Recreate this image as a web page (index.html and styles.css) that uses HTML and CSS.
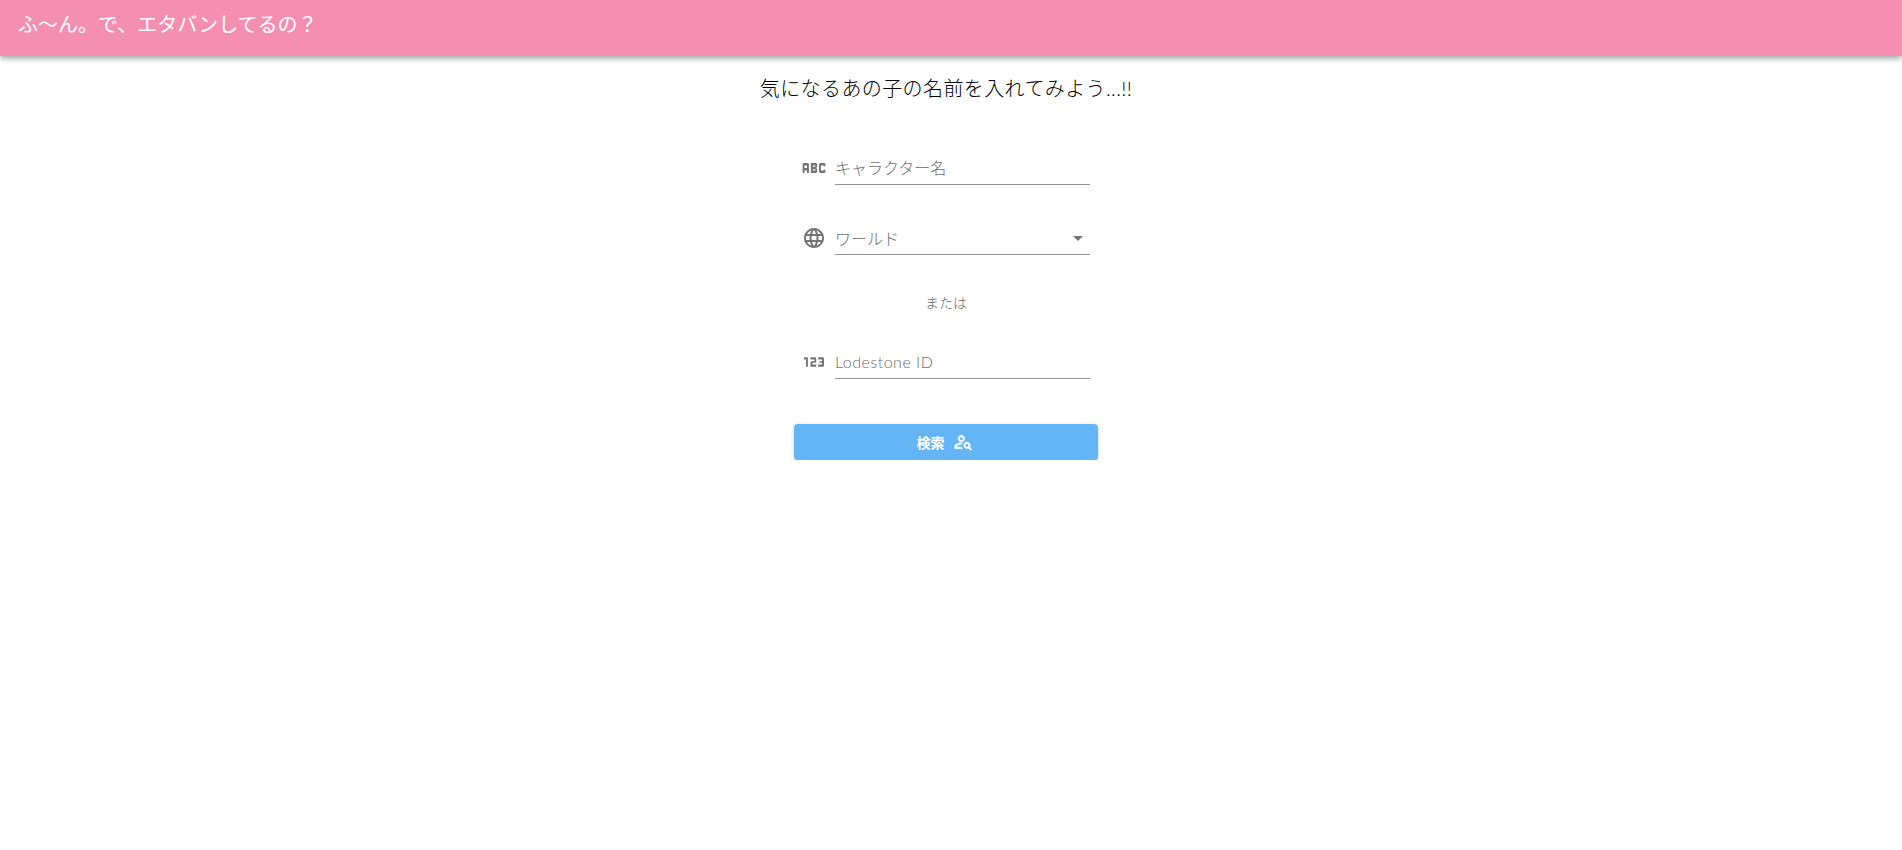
FILE: index.html
```html
<!DOCTYPE html>
<html lang="ja">
<head>
    <meta charset="UTF-8">
    <meta name="viewport" content="width=device-width, initial-scale=1.0">
    <title>エタバン検索</title>
    <link rel="stylesheet" href="styles.css">
</head>
<body>
    <header class="toolbar">ふ〜ん。で、エタバンしてるの？</header>

    <main class="content">
        <h1 class="lead">気になるあの子の名前を入れてみよう...!!</h1>

        <div class="field first">
            <svg class="field-icon" viewBox="0 0 24 24"><path transform="translate(12 12) scale(1.27 1.67) translate(-12 -12)" d="M21 11h-1.5v-.5h-2v3h2V13H21v1c0 .55-.45 1-1 1h-3c-.55 0-1-.45-1-1v-4c0-.55.45-1 1-1h3c.55 0 1 .45 1 1v1zM8 10v5H6.5v-1.5h-2V15H3v-5c0-.55.45-1 1-1h3c.55 0 1 .45 1 1zm-1.5.5h-2V12h2v-1.5zm7 1.5c.55 0 1 .45 1 1v1c0 .55-.45 1-1 1h-4V9h4c.55 0 1 .45 1 1v1c0 .55-.45 1-1 1zM11 10.5v.75h2v-.75h-2zm2 2.25h-2v.75h2v-.75z"/></svg>
            <input class="field-input" type="text" placeholder="キャラクター名">
        </div>

        <div class="field second">
            <svg class="field-icon" viewBox="0 0 24 24"><path d="M11.99 2C6.47 2 2 6.48 2 12s4.47 10 9.99 10C17.52 22 22 17.52 22 12S17.52 2 11.99 2zm6.93 6h-2.95c-.32-1.25-.78-2.45-1.38-3.56 1.84.63 3.37 1.91 4.33 3.56zM12 4.04c.83 1.2 1.48 2.53 1.91 3.96h-3.82c.43-1.43 1.08-2.76 1.91-3.96zM4.26 14C4.1 13.36 4 12.69 4 12s.1-1.36.26-2h3.38c-.08.66-.14 1.32-.14 2s.06 1.34.14 2H4.26zm.82 2h2.95c.32 1.25.78 2.45 1.38 3.56-1.84-.63-3.37-1.9-4.33-3.56zm2.95-8H5.08c.96-1.66 2.49-2.93 4.33-3.56C8.81 5.55 8.35 6.75 8.03 8zM12 19.96c-.83-1.2-1.48-2.53-1.91-3.96h3.82c-.43 1.43-1.08 2.76-1.91 3.96zM14.34 14H9.66c-.09-.66-.16-1.32-.16-2s.07-1.35.16-2h4.68c.09.65.16 1.32.16 2s-.07 1.34-.16 2zm.25 5.56c.6-1.11 1.06-2.31 1.38-3.56h2.95c-.96 1.65-2.49 2.93-4.33 3.56zM16.36 14c.08-.66.14-1.32.14-2s-.06-1.34-.14-2h3.38c.16.64.26 1.31.26 2s-.1 1.36-.26 2h-3.38z"/></svg>
            <div class="field-input select">
                <span>ワールド</span>
                <span class="caret"></span>
            </div>
        </div>

        <p class="or">または</p>

        <div class="field">
            <svg class="field-icon" viewBox="0 0 24 24"><path transform="translate(12 12) scale(1.29 1.6) translate(-11.75 -12)" d="M7 15H5.5v-4.5H4V9h3v6zm6.5-1.5h-3v-1h2c.55 0 1-.45 1-1V10c0-.55-.45-1-1-1H9v1.5h3v1h-2c-.55 0-1 .45-1 1V15h4.5v-1.5zm6 .5v-4c0-.55-.45-1-1-1H15v1.5h3v1h-2v1h2v1h-3V15h3.5c.55 0 1-.45 1-1z"/></svg>
            <input class="field-input latin" type="text" placeholder="Lodestone ID">
        </div>

        <button class="search-btn">
            検索
            <svg class="btn-icon" viewBox="0 0 24 24"><path fill-rule="evenodd" d="M4 18v-.65c0-.34.16-.66.41-.81C6.1 15.53 8.03 15 10 15c.03 0 .05 0 .08.01.1-.7.3-1.37.59-1.98-.22-.02-.44-.03-.67-.03-2.42 0-4.68.67-6.61 1.82-.88.52-1.39 1.5-1.39 2.53V20h9.26c-.42-.6-.75-1.28-.97-2H4zm6-6c2.21 0 4-1.79 4-4s-1.79-4-4-4-4 1.79-4 4 1.79 4 4 4zm0-6c1.1 0 2 .9 2 2s-.9 2-2 2-2-.9-2-2 .9-2 2-2zm10.75 10c0 .74-.21 1.43-.56 2.02l2.31 2.48-1.4 1.4-2.33-2.47c-.59.35-1.28.57-2.02.57-2.21 0-4-1.79-4-4s1.79-4 4-4 4 1.79 4 4zm-2 0c0-1.1-.9-2-2-2s-2 .9-2 2 .9 2 2 2 2-.9 2-2z"/></svg>
        </button>
    </main>
</body>
</html>
```

FILE: styles.css
```css
body {
    margin: 0;
    background-color: #fff;
    font-family: Lato, "Noto Sans CJK JP", sans-serif;
    font-weight: 300;
    color: #000;
}
.toolbar {
    height: 56px;
    padding: 0 18px 10px;
    box-sizing: border-box;
    display: flex;
    align-items: center;
    background-color: #f48fb1;
    color: #fff;
    font-size: 20px;
    font-weight: 400;
    box-shadow: 0 2px 4px -1px rgba(0, 0, 0, 0.2), 0 4px 5px 0 rgba(0, 0, 0, 0.14), 0 1px 10px 0 rgba(0, 0, 0, 0.12);
}
.content {
    width: 1892px;
    padding-top: 16px;
    display: flex;
    flex-direction: column;
    align-items: center;
}
.lead {
    margin: 0;
    font-size: 20px;
    font-weight: 300;
    line-height: 32px;
    letter-spacing: 0.4px;
}
.field {
    width: 304px;
    height: 40px;
    box-sizing: border-box;
    padding-left: 8px;
    display: flex;
    align-items: center;
    gap: 9px;
}
.field.first {
    margin-top: 41px;
}
.field.second {
    margin-top: 30px;
}
.field-icon {
    width: 24px;
    height: 24px;
    margin-top: 6px;
    fill: #757575;
    flex-shrink: 0;
    overflow: visible;
}
.field-input {
    width: 255px;
    height: 40px;
    box-sizing: border-box;
    padding: 6px 0 0 0;
    border: none;
    border-bottom: 1px solid #949494;
    outline: none;
    background: none;
    font-family: inherit;
    font-weight: 300;
    font-size: 16px;
    color: #6e6e6e;
}
.field-input::placeholder {
    color: #6e6e6e;
    opacity: 1;
}
.latin {
    letter-spacing: 0.5px;
}
.select {
    display: flex;
    align-items: center;
    justify-content: space-between;
    padding-right: 7px;
}
.caret {
    width: 0;
    height: 0;
    margin-top: 1px;
    border-left: 5px solid transparent;
    border-right: 5px solid transparent;
    border-top: 5px solid #757575;
}
.or {
    margin: 38px 0 26px;
    font-size: 14px;
    line-height: 20px;
    color: #666;
}
.search-btn {
    width: 304px;
    height: 36px;
    margin-top: 45px;
    padding: 0 3px 0 0;
    display: flex;
    align-items: center;
    justify-content: center;
    gap: 8px;
    border: none;
    border-radius: 4px;
    background-color: #64b5f6;
    color: #fff;
    font-family: inherit;
    font-size: 14px;
    font-weight: 700;
    box-shadow: 0 3px 1px -2px rgba(0, 0, 0, 0.2), 0 2px 2px 0 rgba(0, 0, 0, 0.14), 0 1px 5px 0 rgba(0, 0, 0, 0.12);
}
.btn-icon {
    width: 20px;
    height: 20px;
    fill: #fff;
    stroke: #fff;
    stroke-width: 0.5;
}
```
